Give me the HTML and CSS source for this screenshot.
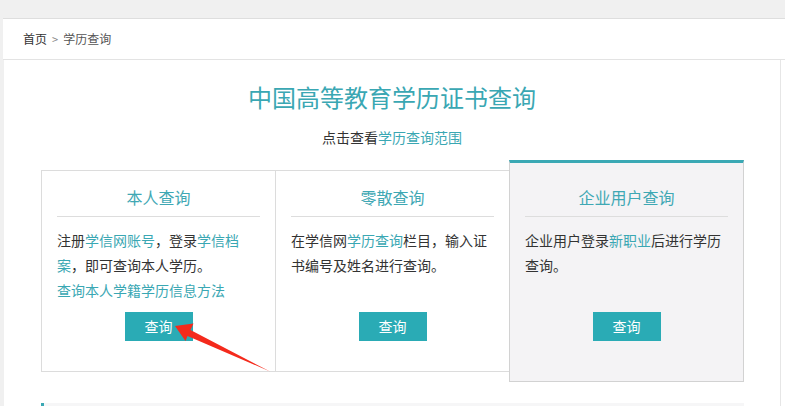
FILE: index.html
```html
<!DOCTYPE html>
<html lang="zh-CN">
<head>
<meta charset="utf-8">
<title>学历查询</title>
<link rel="stylesheet" href="styles.css">
</head>
<body>
<div class="wrap">
  <div class="crumb"><span class="crumb-home">首页</span><span class="crumb-sep">&gt;</span><span class="crumb-cur">学历查询</span></div>
  <div class="main">
    <h1 class="title">中国高等教育学历证书查询</h1>
    <p class="sub">点击查看<a class="link">学历查询范围</a></p>
    <div class="cards">
      <div class="card">
        <h2 class="card-title">本人查询</h2>
        <div class="card-text">注册<a class="link">学信网账号</a>，登录<a class="link">学信档案</a>，即可查询本人学历。<br><a class="link">查询本人学籍学历信息方法</a></div>
        <div class="btn">查询</div>
      </div>
      <div class="card">
        <h2 class="card-title">零散查询</h2>
        <div class="card-text">在学信网<a class="link">学历查询</a>栏目，输入证书编号及姓名进行查询。</div>
        <div class="btn">查询</div>
      </div>
      <div class="card card-active">
        <h2 class="card-title">企业用户查询</h2>
        <div class="card-text">企业用户登录<a class="link">新职业</a>后进行学历查询。</div>
        <div class="btn">查询</div>
      </div>
    </div>
    <div class="next-section"></div>
  </div>
</div>
<svg class="arrow" width="785" height="406" viewBox="0 0 785 406" xmlns="http://www.w3.org/2000/svg">
  <polygon points="175,326 193.5,323.5 190.5,330 270,371.5 187.5,336 185.5,341" fill="#f42a1c"/>
</svg>
</body>
</html>
```

FILE: styles.css
```css
html, body {
  margin: 0;
  padding: 0;
}
body {
  background: #f0f0f0;
  padding-top: 18px;
  position: relative;
  height: 388px;
  overflow: hidden;
  font-family: "Noto Sans CJK SC", "Noto Sans", sans-serif;
  color: #333;
}
.wrap {
  margin-left: 3px;
  background: #fff;
  height: 400px;
}
.crumb {
  border-top: 1px solid #dedede;
  border-bottom: 1px solid #e3e3e3;
  height: 40px;
  line-height: 40px;
  padding-left: 20px;
  font-size: 12px;
}
.crumb-home {
  color: #333;
}
.crumb-sep {
  color: #888;
  margin: 0 5px;
  font-size: 11px;
}
.crumb-cur {
  color: #555;
}
.main {
  width: 778px;
  border-right: 1px solid #e6e6e6;
  border-left: 1px solid #f0f0f0;
  box-sizing: border-box;
  padding-top: 20px;
  height: 360px;
}
.title {
  margin: 0;
  text-align: center;
  font-size: 24px;
  line-height: 34px;
  font-weight: normal;
  color: #3aa7b3;
}
.sub {
  margin: 13px 0 0;
  text-align: center;
  font-size: 14px;
  line-height: 20px;
  color: #333;
}
.link {
  color: #3aa7b3;
  text-decoration: none;
}
.cards {
  display: flex;
  align-items: center;
  width: 703px;
  margin: 13px 0 0 37px;
}
.card {
  width: 235px;
  box-sizing: border-box;
  border: 1px solid #dcdcdc;
  background: #fff;
  padding: 15px 15px 30px;
  margin-left: -1px;
  text-align: center;
}
.card:first-child {
  margin-left: 0;
}
.card-active {
  background: #f4f3f5;
  border-color: #d2d2d2;
  border-top: 3px solid #3aa8b4;
  padding-top: 23px;
  padding-bottom: 40px;
  position: relative;
}
.card-title {
  margin: 0;
  font-size: 16px;
  line-height: 22px;
  font-weight: normal;
  color: #3fa8b4;
  padding-bottom: 8px;
  border-bottom: 1px solid #dddddd;
}
.card-text {
  margin-top: 11px;
  height: 75px;
  text-align: left;
  font-size: 14px;
  line-height: 25px;
  color: #333;
}
.btn {
  display: inline-block;
  width: 68px;
  height: 29px;
  line-height: 29px;
  margin-top: 9px;
  background: #2aabb5;
  color: #fff;
  font-size: 14px;
  text-align: center;
}
.next-section {
  width: 700px;
  height: 20px;
  margin: 21px 0 0 37px;
  background: #f6f6f7;
  border-left: 3px solid #3aa8b4;
}
.arrow {
  position: absolute;
  left: 0;
  top: 0;
  pointer-events: none;
}
```
